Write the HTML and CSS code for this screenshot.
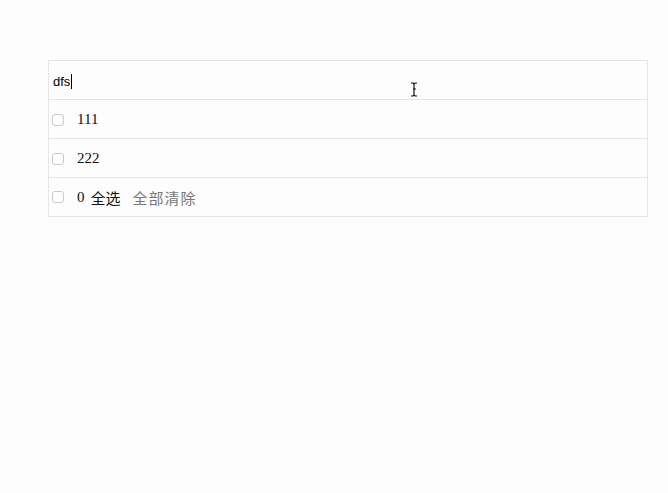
FILE: index.html
```html
<!DOCTYPE html>
<html lang="zh">
<head>
	<meta charset="UTF-8">
	<title>todo</title>
	<link rel="stylesheet" href="styles.css">
</head>
<body>
	<div class="todo">
		<div class="row head">
			<div class="new-todo">dfs<span class="caret"></span></div>
			<svg class="ibeam" width="9" height="15" viewBox="0 0 9 15">
				<path d="M1 1h2l1 1 1-1h2M4 2v11M1 14h2l1-1 1 1h2M3 7h3" stroke="#111" stroke-width="1.2" fill="none"/>
			</svg>
		</div>
		<div class="row item"><span class="box"></span><span class="label">111</span></div>
		<div class="row item"><span class="box"></span><span class="label">222</span></div>
		<div class="row item foot">
			<span class="box"></span>
			<span class="label">0</span>
			<span class="all">全选</span>
			<span class="clear">全部清除</span>
		</div>
	</div>
</body>
</html>
```

FILE: styles.css
```css
*{padding:0;margin:0;box-sizing:border-box;}
body{
	background:#fdfdfd;
	font-family:"Liberation Serif","Noto Sans CJK SC",serif;
	padding:60px 0 0 48px;
}
.todo{
	width:600px;
	border:1px solid #e6e6e6;
}
.row{
	height:39px;
	border-top:1px solid #e6e6e6;
	display:flex;
	align-items:center;
}
.row.head{
	border-top:none;
	height:38px;
	position:relative;
}
.new-todo{
	padding:0 0 0 4px;
	font-family:"Liberation Sans",sans-serif;
	font-size:13px;
	color:#000;
	display:flex;
	align-items:center;
	margin-top:2px;
}
.caret{
	display:inline-block;
	width:1px;
	height:15px;
	background:#000;
	margin-left:1px;
}
.ibeam{
	position:absolute;
	left:361px;
	top:21px;
}
.item{padding-left:3px;font-size:15px;color:#111;padding-top:1px;}
.box{
	width:12px;
	height:12px;
	border:1px solid #c9c9c9;
	border-radius:3px;
	background:#fff;
	margin-right:13px;
}
.foot{padding-top:0;}
.foot .label{margin-right:6px;}
.all{font-size:15px;color:#111;margin-right:12px;}
.clear{font-size:15px;color:#777;letter-spacing:1px;}
```
